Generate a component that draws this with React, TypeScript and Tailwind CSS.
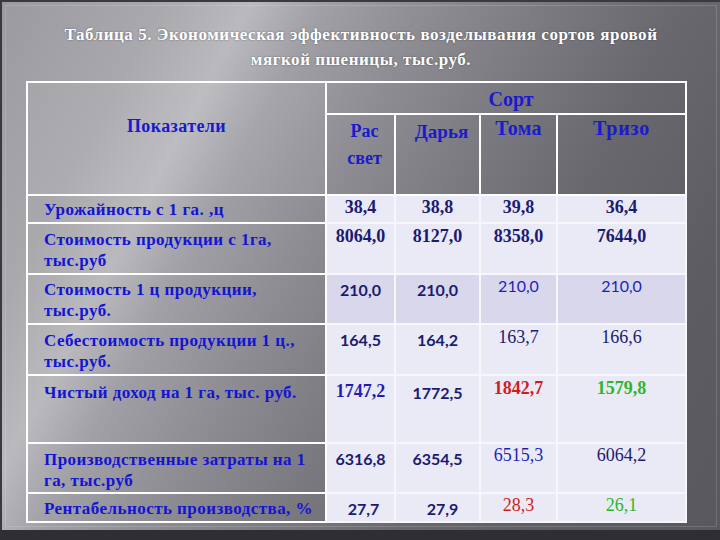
import React from "react";

type Cell = { v: string; sans?: boolean; bold?: boolean; c: string; pt: string; pl?: string };

const NAVY = "text-[#1b1b70]";
const BLUE = "text-[#1f1fb8]";
const RED = "text-[#d21c1c]";
const GREEN = "text-[#2cb62c]";

const rows: { label: string[]; h: string; lpt: string; shade?: boolean; cells: Cell[] }[] = [
  {
    label: ["Урожайность с 1 га. ,ц"], h: "h-[28px]", lpt: "pt-[3px]",
    cells: [
      { v: "38,4", bold: true, c: NAVY, pt: "pt-[1px]" },
      { v: "38,8", bold: true, c: NAVY, pt: "pt-[1px]" },
      { v: "39,8", bold: true, c: NAVY, pt: "pt-[1px]" },
      { v: "36,4", bold: true, c: NAVY, pt: "pt-[1px]" },
    ],
  },
  {
    label: ["Стоимость продукции с 1га,", "тыс.руб"], h: "h-[51px]", lpt: "pt-[5px]",
    cells: [
      { v: "8064,0", bold: true, c: NAVY, pt: "pt-[2px]" },
      { v: "8127,0", bold: true, c: NAVY, pt: "pt-[2px]" },
      { v: "8358,0", bold: true, c: NAVY, pt: "pt-[2px]" },
      { v: "7644,0", bold: true, c: NAVY, pt: "pt-[2px]" },
    ],
  },
  {
    label: ["Стоимость 1 ц продукции,", "тыс.руб."], h: "h-[50px]", lpt: "pt-[4px]", shade: true,
    cells: [
      { v: "210,0", sans: true, bold: true, c: NAVY, pt: "pt-[5px]" },
      { v: "210,0", sans: true, bold: true, c: NAVY, pt: "pt-[5px]" },
      { v: "210,0", sans: true, c: BLUE, pt: "pt-[1px]" },
      { v: "210,0", sans: true, c: BLUE, pt: "pt-[1px]" },
    ],
  },
  {
    label: ["Себестоимость продукции 1 ц.,", "тыс.руб."], h: "h-[51px]", lpt: "pt-[5px]",
    cells: [
      { v: "164,5", sans: true, bold: true, c: NAVY, pt: "pt-[5px]" },
      { v: "164,2", sans: true, bold: true, c: NAVY, pt: "pt-[5px]" },
      { v: "163,7", c: NAVY, pt: "pt-[2px]" },
      { v: "166,6", c: NAVY, pt: "pt-[2px]" },
    ],
  },
  {
    label: ["Чистый доход на 1 га, тыс. руб."], h: "h-[68px]", lpt: "pt-[6px]",
    cells: [
      { v: "1747,2", bold: true, c: BLUE, pt: "pt-[5px]" },
      { v: "1772,5", sans: true, bold: true, c: NAVY, pt: "pt-[7px]" },
      { v: "1842,7", bold: true, c: RED, pt: "pt-[2px]" },
      { v: "1579,8", bold: true, c: GREEN, pt: "pt-[2px]" },
    ],
  },
  {
    label: ["Производственные затраты на 1", "га, тыс.руб"], h: "h-[50px]", lpt: "pt-[5px]",
    cells: [
      { v: "6316,8", sans: true, bold: true, c: NAVY, pt: "pt-[5px]" },
      { v: "6354,5", sans: true, bold: true, c: NAVY, pt: "pt-[5px]" },
      { v: "6515,3", c: BLUE, pt: "pt-[1px]" },
      { v: "6064,2", c: NAVY, pt: "pt-[1px]" },
    ],
  },
  {
    label: ["Рентабельность производства, %"], h: "h-[29px]", lpt: "pt-[4px]",
    cells: [
      { v: "27,7", sans: true, bold: true, c: NAVY, pt: "pt-[5px]", pl: "pl-[6px]" },
      { v: "27,9", sans: true, bold: true, c: NAVY, pt: "pt-[5px]", pl: "pl-[10px]" },
      { v: "28,3", c: RED, pt: "pt-[1px]" },
      { v: "26,1", c: GREEN, pt: "pt-[1px]" },
    ],
  },
];

const SERIF = "[font-family:'Liberation_Serif','Times_New_Roman',serif]";
const SANS = "[font-family:'Lato','Liberation_Sans',sans-serif]";

export default function App() {
  return (
    <div className={`w-[720px] h-[540px] bg-[#2f2f33] overflow-hidden ${SERIF}`}>
      <div className="relative w-[720px] h-[530px] border-l-2 border-t-2 border-[#3a3a3e] bg-[linear-gradient(118deg,#9a9aa0_0%,#a8a8ad_16%,#b9b9be_25%,#a0a0a6_32%,#8e8e94_42%,#7a7a80_55%,#68686e_68%,#5c5c62_85%,#58585e_100%)]">
        <div className="absolute inset-[3px] border border-white/15 pointer-events-none" />
        <div className="pt-[20px] text-center text-white font-bold text-[17px] leading-[25px] tracking-[0.55px] [text-shadow:0_0_2px_rgba(0,0,0,0.45)]">
          <div>Таблица 5. Экономическая эффективность возделывания сортов яровой</div>
          <div>мягкой пшеницы, тыс.руб.</div>
        </div>
        <table className={`ml-[24px] mt-[9px] w-[659px] table-fixed border-collapse border-2 border-white ${SERIF}`}>
          <colgroup>
            <col className="w-[299px]" />
            <col className="w-[69px]" />
            <col className="w-[85px]" />
            <col className="w-[77px]" />
            <col className="w-[129px]" />
          </colgroup>
          <tbody>
            <tr className="h-[32px]">
              <td rowSpan={2} className="border-2 border-white align-top text-center pt-[30px] text-[18px] tracking-[0.4px] font-bold text-[#1a1ad0] bg-white/5">
                Показатели
              </td>
              <td colSpan={4} className="border-2 border-white text-center text-[20px] font-bold text-[#1a1ad0] leading-[22px] pt-[2px] pl-[10px]">
                Сорт
              </td>
            </tr>
            <tr className="h-[81px]">
              <td className="border-2 border-white align-top text-center text-[18px] font-bold text-[#1a1ad0] leading-[27px] pt-[3px] pl-[8px]">
                <div>Рас</div>
                <div>свет</div>
              </td>
              <td className="border-2 border-white align-top text-center text-[19px] font-bold text-[#1a1ad0] leading-[27px] pt-[3px] pl-[8px]">
                Дарья
              </td>
              <td className="border-2 border-white align-top text-center text-[20px] tracking-[0.3px] font-bold text-[#1a1ad0] leading-[27px]">
                Тома
              </td>
              <td className="border-2 border-white align-top text-center text-[20px] tracking-[0.8px] font-bold text-[#1a1ad0] leading-[27px]">
                Тризо
              </td>
            </tr>
            {rows.map((r, i) => (
              <tr key={i} className={r.h}>
                <td className={`border-2 border-white align-top pl-[16px] text-[17px] tracking-[0.45px] leading-[21px] font-bold text-[#1414d4] ${r.lpt}`}>
                  {r.label.map((l, j) => (
                    <div key={j} className="whitespace-nowrap">{l}</div>
                  ))}
                </td>
                {r.cells.map((c, j) => (
                  <td
                    key={j}
                    className={`border-2 border-[#f6f6fb] align-top text-center leading-[20px] ${r.shade ? "bg-[#d8d7ec]" : "bg-[#eae9f6]"} ${c.pt} ${c.pl ?? ""} ${c.c} ${c.sans ? `${SANS} text-[16px]` : "text-[18px]"} ${c.bold ? "font-bold" : "font-normal"}`}
                  >
                    {c.v}
                  </td>
                ))}
              </tr>
            ))}
          </tbody>
        </table>
      </div>
    </div>
  );
}
